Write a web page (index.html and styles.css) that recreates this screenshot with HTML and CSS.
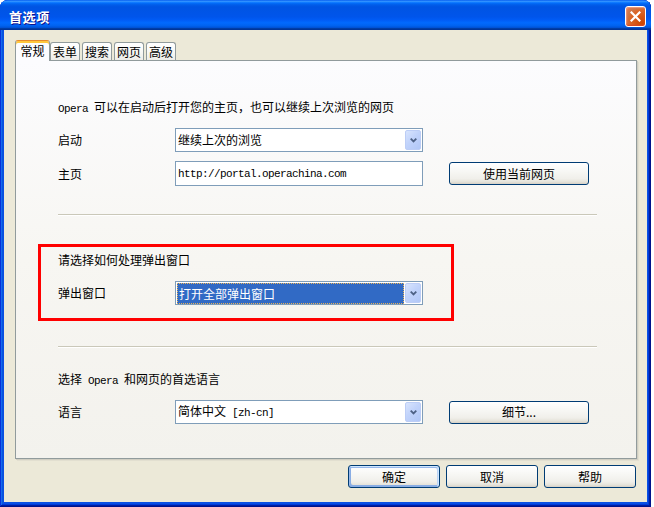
FILE: index.html
```html
<!DOCTYPE html>
<html lang="zh-CN">
<head>
<meta charset="utf-8">
<title>首选项</title>
<link rel="stylesheet" href="styles.css">
</head>
<body>
<div class="window">
  <div class="titlebar">
    <span class="title">首选项</span>
    <span class="close" aria-label="关闭"><svg width="11" height="11" viewBox="0 0 11 11"><path d="M1.5 1.5 L9.5 9.5 M9.5 1.5 L1.5 9.5" stroke="#fff" stroke-width="2.2" stroke-linecap="square" fill="none"/></svg></span>
  </div>
  <div class="client">
    <div class="tabs">
      <div class="tab active">常规</div>
      <div class="tab">表单</div>
      <div class="tab">搜索</div>
      <div class="tab">网页</div>
      <div class="tab">高级</div>
    </div>
    <div class="panel">
      <p class="text first"><span class="mono">Opera </span>可以在启动后打开您的主页，也可以继续上次浏览的网页</p>
      <div class="row r1">
        <span class="label">启动</span>
        <div class="select"><span class="value">继续上次的浏览</span><span class="drop"><svg width="7" height="5" viewBox="0 0 7 5"><polyline points="0.7,0.7 3.5,3.5 6.3,0.7" stroke="#4D6185" stroke-width="1.8" fill="none"/></svg></span></div>
      </div>
      <div class="row r2">
        <span class="label">主页</span>
        <div class="input"><span class="mono">http://portal.operachina.com</span></div>
        <span class="btn wide">使用当前网页</span>
      </div>
      <div class="sep s1"></div>
      <div class="highlight">
        <p class="text">请选择如何处理弹出窗口</p>
        <div class="row r3">
          <span class="label">弹出窗口</span>
          <div class="select"><span class="value selected">打开全部弹出窗口</span><span class="drop"><svg width="7" height="5" viewBox="0 0 7 5"><polyline points="0.7,0.7 3.5,3.5 6.3,0.7" stroke="#4D6185" stroke-width="1.8" fill="none"/></svg></span></div>
        </div>
      </div>
      <div class="sep s2"></div>
      <p class="text third">选择<span class="mono"> Opera </span>和网页的首选语言</p>
      <div class="row r4">
        <span class="label">语言</span>
        <div class="select"><span class="value">简体中文<span class="mono"> [zh-cn]</span></span><span class="drop"><svg width="7" height="5" viewBox="0 0 7 5"><polyline points="0.7,0.7 3.5,3.5 6.3,0.7" stroke="#4D6185" stroke-width="1.8" fill="none"/></svg></span></div>
        <span class="btn wide">细节...</span>
      </div>
    </div>
    <div class="actions">
      <span class="btn action default">确定</span>
      <span class="btn action">取消</span>
      <span class="btn action">帮助</span>
    </div>
  </div>
</div>
</body>
</html>
```

FILE: styles.css
```css
* { box-sizing: border-box; }
html, body { margin: 0; padding: 0; background: #ffffff; }
body {
  font-family: "Noto Sans CJK SC", "Noto Sans", sans-serif;
  font-size: 12px;
  color: #000;
}
.mono {
  font-family: "Liberation Mono", "DejaVu Sans Mono", monospace;
  font-size: 11px;
  letter-spacing: -0.6px;
  white-space: pre;
}
.window {
  width: 651px;
  height: 507px;
  display: flex;
  flex-direction: column;
  border-radius: 8px 8px 0 0;
  overflow: hidden;
  background: #0A50E4;
  box-shadow: inset -1px -1px #00138c, inset 1px 1px #0831d9, inset -2px -2px #001ea0, inset 2px 2px #166aee, inset -3px -3px #003bda, inset 3px 3px #0855dd;
}
.titlebar {
  height: 30px;
  flex: none;
  display: flex;
  align-items: center;
  justify-content: space-between;
  padding: 3px 5px 0 9px;
  background: linear-gradient(180deg, #0058ee 0%, #3593ff 4%, #288eff 6%, #127dff 8%, #036ffc 10%, #0262ee 14%, #0057e5 20%, #0054e3 24%, #0055eb 56%, #005bf5 66%, #026afe 76%, #0062ef 86%, #0052d6 92%, #0040ab 94%, #003092 100%);
}
.title {
  color: #fff;
  font-weight: bold;
  font-size: 13px;
  letter-spacing: 0.6px;
  text-shadow: 1px 1px #0f1089;
}
.close {
  width: 21px;
  height: 21px;
  border: 1px solid #fff;
  border-radius: 3px;
  display: flex;
  align-items: center;
  justify-content: center;
  background: radial-gradient(circle at 85% 85%, #cc4600 0%, #dc6527 55%, #cd7546 70%, #e57a52 100%);
  box-shadow: inset 0 -1px 1px #da4624, inset 1px 1px 1px #f09a7e;
}
.client {
  flex: 1;
  margin: 0 4px 5px 4px;
  background: #ECE9D8;
  padding: 11px 10px 0 11px;
  display: flex;
  flex-direction: column;
}
.tabs {
  display: flex;
  align-items: flex-end;
  height: 20px;
  margin-bottom: -1px;
}
.tab {
  height: 19px;
  width: 30px;
  margin-right: 2px;
  border: 1px solid #919B9C;
  border-bottom: none;
  border-radius: 3px 3px 0 0;
  background: linear-gradient(180deg, #ffffff 0%, #f8f8f5 50%, #ecebe6 100%);
  text-align: center;
  line-height: 17px;
}
.tab.active {
  height: 21px;
  width: 35px;
  margin-right: 0;
  background: #FCFCFE;
  border-top: 1px solid #E68B2C;
  box-shadow: inset 0 2px #FFC73C;
  padding-top: 2px;
  line-height: 16px;
  position: relative;
  z-index: 1;
}
.panel {
  height: 399px;
  flex: none;
  border: 1px solid #919B9C;
  background: linear-gradient(180deg, #FCFCFE 0%, #F7F6F2 50%, #F3F2ED 100%);
  box-shadow: 1px 1px 0 #D0CEC2, 2px 2px 0 #E2DFD0;
  padding: 0 39px 0 42px;
}
.text {
  margin: 0;
  height: 16px;
  line-height: 16px;
  white-space: nowrap;
}
.text.first { margin-top: 38px; }
.text.third { margin-top: 23px; }
.row {
  display: flex;
  align-items: center;
  height: 24px;
}
.r1 { margin-top: 13px; }
.r2 { margin-top: 9px; height: 25px; }
.r3 { margin-top: 13px; }
.r4 { margin-top: 13px; }
.label {
  width: 117px;
  flex: none;
  line-height: 16px;
}
.select {
  width: 248px;
  height: 24px;
  flex: none;
  border: 1px solid #7F9DB9;
  background: #fff;
  display: flex;
  align-items: center;
}
.value {
  flex: 1;
  padding-left: 2px;
  line-height: 16px;
  white-space: nowrap;
}
.value.selected {
  height: 21px;
  margin: 0 1px;
  padding-left: 1px;
  line-height: 19px;
  background: #316AC5;
  color: #fff;
  border: 1px dotted #E9B45A;
}
.drop {
  width: 16px;
  height: 20px;
  margin-right: 1px;
  flex: none;
  border: 1px solid #BCCDF6;
  border-radius: 2px;
  background: linear-gradient(135deg, #D8E4FD 0%, #C1D3FB 45%, #B1C7F7 100%);
  display: flex;
  align-items: center;
  justify-content: center;
}
.input {
  width: 248px;
  height: 25px;
  flex: none;
  border: 1px solid #7F9DB9;
  background: #fff;
  padding-left: 2px;
  display: flex;
  align-items: center;
}
.btn {
  display: flex;
  align-items: center;
  justify-content: center;
  height: 23px;
  border: 1px solid #003C74;
  border-radius: 3px;
  background: linear-gradient(180deg, #ffffff 0%, #f7f7f4 40%, #f0efea 75%, #e5e3da 90%, #d6d0c5 100%);
  line-height: 16px;
  flex: none;
}
.btn.wide {
  width: 140px;
  margin-left: 26px;
}
.sep {
  height: 2px;
  border-top: 1px solid #CAC8B9;
  border-bottom: 1px solid #FFFFFF;
}
.s1 { margin-top: 28px; }
.s2 { margin-top: 25px; }
.highlight {
  margin: 28px 0 0 -20px;
  width: 416px;
  border: 3px solid #FF0000;
  padding: 5px 0 13px 17px;
}
.actions {
  display: flex;
  justify-content: flex-end;
  gap: 6px;
  margin-top: 6px;
  padding-right: 1px;
}
.btn.action { width: 92px; }
.btn.default {
  box-shadow: inset -1px 1px #CEE7FF, inset 1px 2px #98B8EA, inset -2px 2px #BCD4F6, inset 1px -1px #89ADE4, inset 2px -2px #89ADE4;
}
```
